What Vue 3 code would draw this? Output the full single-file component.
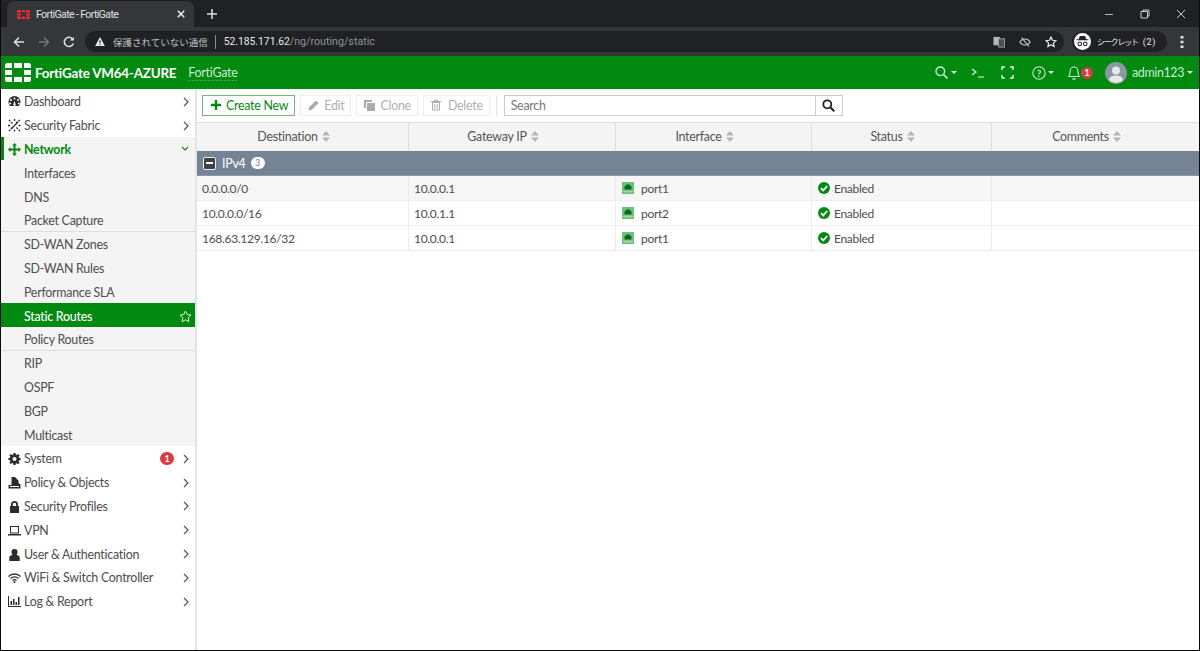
<script setup>
const topItems = [
  { label: 'Dashboard', icon: 'dash' },
  { label: 'Security Fabric', icon: 'fabric' },
]
const netItems = [
  { label: 'Interfaces' }, { label: 'DNS' }, { label: 'Packet Capture', sep: true },
  { label: 'SD-WAN Zones' }, { label: 'SD-WAN Rules' }, { label: 'Performance SLA' },
  { label: 'Static Routes', active: true }, { label: 'Policy Routes', sep: true },
  { label: 'RIP' }, { label: 'OSPF' }, { label: 'BGP' }, { label: 'Multicast' },
]
const bottomItems = [
  { label: 'System', icon: 'gear', badge: 1 },
  { label: 'Policy & Objects', icon: 'policy' },
  { label: 'Security Profiles', icon: 'lock' },
  { label: 'VPN', icon: 'laptop' },
  { label: 'User & Authentication', icon: 'user' },
  { label: 'WiFi & Switch Controller', icon: 'wifi' },
  { label: 'Log & Report', icon: 'chart' },
]
const columns = ['Destination', 'Gateway IP', 'Interface', 'Status', 'Comments']
const rows = [
  { dest: '0.0.0.0/0', gw: '10.0.0.1', port: 'port1', tint: true },
  { dest: '10.0.0.0/16', gw: '10.0.1.1', port: 'port2' },
  { dest: '168.63.129.16/32', gw: '10.0.0.1', port: 'port1' },
]
const iconPaths = {
  dash: 'M6.5 1A6 6 0 0 0 .5 7c0 1.6.6 3 1.6 4h8.8a6 6 0 0 0 1.6-4 6 6 0 0 0-6-6Zm0 1.5a1 1 0 1 1 0 2 1 1 0 0 1 0-2ZM3 4a1 1 0 1 1 0 2 1 1 0 0 1 0-2Zm7 0a1 1 0 1 1 0 2 1 1 0 0 1 0-2ZM2.2 7.5a1 1 0 1 1 0 2 1 1 0 0 1 0-2Zm8.6 0a1 1 0 1 1 0 2 1 1 0 0 1 0-2ZM6.5 6l1 3a1.2 1.2 0 1 1-2 0Z',
  gear: 'M5.5 1h2l.3 1.6 1 .4L10.200 2l1.400 1.400-1 1.400.4 1 1.600.3v2l-1.600.3-.4 1 1 1.400-1.400 1.400-1.400-1-1 .4L7.500 13h-2l-.3-1.600-1-.4-1.400 1-1.400-1.400 1-1.400-.4-1L.4 8V6L2 5.700l.4-1-1-1.400L2.800 2l1.400 1 1-.4ZM6.500 5a2 2 0 1 0 0 4 2 2 0 0 0 0-4Z',
  policy: 'M3.500 1h3.500l3.500 3.500V7l2 1.500V12.500H.5V9h3ZM2 10v1h9v-1Z',
  lock: 'M6.500 1a3.500 3.500 0 0 0-3.500 3.500V6H2v7h9V6h-1V4.500A3.500 3.500 0 0 0 6.500 1Zm0 1.800c1 0 1.700.7 1.700 1.700V6H4.800V4.500c0-1 .7-1.700 1.700-1.700Z',
  laptop: 'M2 2h9v7.500H2Zm1 1v5.500h7V3ZM0 10h13v1.500H0Z',
  user: 'M6.500 1a3 3 0 0 1 3 3.200c0 1-.4 2-1 2.600l2.500 1.200c.5.300.7.700.7 1.200V13H1.300V9.200c0-.5.2-.9.700-1.200l2.500-1.200c-.6-.6-1-1.600-1-2.600a3 3 0 0 1 3-3.200Z',
  chart: 'M0 1h1v10h12v1H0Zm2.500 5h1.500v4H2.500Zm2.500-2h1.500v6H5Zm2.500 3H9v3H7.500Zm2.500-5h1.500v8H10Z',
}
</script>

<template>
  <div class="screen">
    <div class="tabstrip">
      <div class="tab">
        <svg class="favicon" viewBox="0 0 13 9" width="13" height="9">
          <path fill="#ee2b35" d="M1 0h3v2.500H0V1a1 1 0 0 1 1-1ZM5 0h3v2.500H5ZM9 0h3a1 1 0 0 1 1 1v1.500H9ZM0 3.500h4V5.500H0ZM9 3.500h4V5.500H9ZM0 6.500h4V9H1a1 1 0 0 1-1-1ZM5 6.500h3V9H5ZM9 6.500h4V8a1 1 0 0 1-1 1H9Z" />
        </svg>
        <span class="tab-title">FortiGate - FortiGate</span>
        <svg class="tab-x" viewBox="0 0 10 10" width="8" height="8"><path d="M1 1l8 8M9 1l-8 8" stroke="#e8eaed" stroke-width="2" /></svg>
      </div>
      <svg class="newtab" viewBox="0 0 10 10" width="10" height="10"><path d="M5 0v10M0 5h10" stroke="#dfe1e5" stroke-width="1.500" /></svg>
      <div class="winctl">
        <svg viewBox="0 0 10 10" width="10" height="10"><path d="M1 5.500h8" stroke="#bbb" stroke-width="1" /></svg>
        <svg viewBox="0 0 10 10" width="10" height="10"><path d="M1 2.500h6.500V9H1ZM3 2.500V1h6v6H7.500" fill="none" stroke="#ccc" stroke-width="1" /></svg>
        <svg viewBox="0 0 10 10" width="10" height="10"><path d="M1 1l8 8M9 1l-8 8" stroke="#ccc" stroke-width="1" /></svg>
      </div>
    </div>

    <div class="browserbar">
      <svg class="nav" viewBox="0 0 12 12" width="12" height="12"><path d="M11 6H1.500M6 1.500 1.500 6 6 10.500" fill="none" stroke="#dfe1e5" stroke-width="1.500" /></svg>
      <svg class="nav" viewBox="0 0 12 12" width="12" height="12"><path d="M1 6h9.500M6 1.500 10.500 6 6 10.500" fill="none" stroke="#74777b" stroke-width="1.500" /></svg>
      <svg class="nav" viewBox="0 0 12 12" width="12" height="12"><path d="M10.300 7.500A4.600 4.600 0 1 1 9.500 3" fill="none" stroke="#dfe1e5" stroke-width="1.500" /><path d="M10.800.8v3.800H7z" fill="#dfe1e5" /></svg>
      <div class="omnibox">
        <svg viewBox="0 0 12 11" width="10" height="9"><path fill="#e8eaed" d="M6 0l6 11H0Z" /><path stroke="#202124" stroke-width="1.300" d="M6 4v3.500M6 8.500v1.200" /></svg>
        <span class="warn">保護されていない通信</span>
        <span class="pipe"></span>
        <span class="host">52.185.171.62</span><span class="path">/ng/routing/static</span>
        <span class="grow"></span>
        <svg class="omni-ico" viewBox="0 0 13 12" width="12" height="12"><rect x=".5" y=".5" width="7" height="9" fill="#b5b8bb" /><rect x="6" y="2.500" width="6.500" height="9" fill="#4a4d51" stroke="#9aa0a6" /></svg>
        <svg class="omni-ico" viewBox="0 0 14 12" width="12" height="12"><path d="M1 6s2.200-3.500 6-3.500S13 6 13 6s-2.200 3.500-6 3.500S1 6 1 6Z" fill="none" stroke="#c4c7c5" stroke-width="1.300" /><path d="M3 .8 11.500 11" stroke="#c4c7c5" stroke-width="1.300" /></svg>
        <svg class="omni-ico star" viewBox="0 0 12 12" width="12" height="12"><path d="M6 1l1.500 3.300 3.500.4-2.600 2.400.7 3.500L6 8.800l-3.100 1.800.7-3.500L1 4.700l3.500-.4Z" fill="none" stroke="#e8eaed" stroke-width="1.200" /></svg>
      </div>
      <div class="incognito">
        <span class="inc-ico">
          <svg viewBox="0 0 14 12" width="13" height="11"><path fill="#202124" d="M4 0h6l1 3.500h2.500v1H.5v-1H3Z" /><circle cx="4" cy="8.500" r="2" fill="none" stroke="#202124" stroke-width="1.100" /><circle cx="10" cy="8.500" r="2" fill="none" stroke="#202124" stroke-width="1.100" /></svg>
        </span>
        <span class="inc-name">シークレット</span>
        <span class="inc-count">(2)</span>
      </div>
      <svg class="kebab" viewBox="0 0 4 14" width="4" height="14"><path fill="#dfe1e5" d="M.5 1h3v2.500h-3zM.5 5.800h3v2.500h-3zM.5 10.500h3V13h-3z" /></svg>
    </div>

    <header class="appbar">
      <svg class="logo" viewBox="0 0 26 19" width="26" height="19">
        <path fill="#fff" d="M2.500 0H7v5H0V2.500A2.500 2.500 0 0 1 2.500 0ZM9 0h8v5H9ZM19 0h4.500A2.500 2.500 0 0 1 26 2.500V5h-7ZM0 7h7v5H0ZM19 7h7v5h-7ZM0 14h7v5H2.500A2.500 2.500 0 0 1 0 16.500ZM9 14h8v5H9ZM19 14h7v2.500a2.500 2.500 0 0 1-2.500 2.500H19Z" />
      </svg>
      <span class="model">FortiGate VM64-AZURE</span>
      <span class="hostname">FortiGate</span>
      <span class="grow"></span>
      <div class="app-actions">
        <span class="act a-search">
          <svg viewBox="0 0 13 13" width="13" height="13"><circle cx="5.300" cy="5.300" r="4.300" fill="none" stroke="#cdeccf" stroke-width="1.400" /><path d="M8.500 8.500l4 4" stroke="#cdeccf" stroke-width="1.600" /></svg>
          <i class="caret"></i>
        </span>
        <svg class="act a-cli" viewBox="0 0 14 10" width="14" height="10"><path d="M1 1l4 3-4 3M7 9h6" fill="none" stroke="#e3f4e4" stroke-width="1.200" /></svg>
        <svg class="act a-full" viewBox="0 0 13 13" width="13" height="13"><path d="M1 4V1h3M9 1h3v3M12 9v3H9M4 12H1V9" fill="none" stroke="#e3f4e4" stroke-width="1.400" /></svg>
        <span class="act a-help">
          <svg viewBox="0 0 14 14" width="14" height="14"><circle cx="7" cy="7" r="6.200" fill="none" stroke="#cdeccf" stroke-width="1.100" /><text x="7" y="10.500" text-anchor="middle" class="qmark">?</text></svg>
          <i class="caret"></i>
        </span>
        <span class="act a-bell">
          <svg viewBox="0 0 12 14" width="12" height="14"><path d="M6 1a3.800 3.800 0 0 0-3.800 3.800c0 3.700-1.500 5-1.500 5.700h10.600c0-.7-1.500-2-1.500-5.700A3.800 3.800 0 0 0 6 1ZM4.500 12.300a1.600 1.600 0 0 0 3 0" fill="none" stroke="#cdeccf" stroke-width="1.100" /></svg>
          <b class="bell-badge">1</b>
        </span>
        <span class="avatar">
          <svg viewBox="0 0 22 22" width="22" height="22"><circle cx="11" cy="11" r="11" fill="#8d96a5" /><circle cx="11" cy="8.500" r="4" fill="#e8e8e8" /><path d="M3.800 18c1-3.500 3.500-4.500 7.200-4.500s6.200 1 7.200 4.500a10 10 0 0 1-14.400 0Z" fill="#e8e8e8" /></svg>
        </span>
        <span class="username">admin123</span><i class="caret"></i>
      </div>
    </header>

    <div class="main">
      <nav class="sidebar">
        <a v-for="item in topItems" :key="item.label" class="nav-row">
          <svg v-if="item.icon === 'dash'" class="nav-ico" viewBox="0 0 13 13" width="13" height="13"><path fill="#2c2c2c" fill-rule="evenodd" :d="iconPaths.dash" /></svg>
          <svg v-else class="nav-ico" viewBox="0 0 13 13" width="13" height="13"><path d="M1 1l4 4M12 1 8 4M1 12l4-4M12 12 8 8M6.500 0v2.500M6.500 10.500V13M0 6.500h2.500M10.500 6.500H13" stroke="#2c2c2c" stroke-width="1.300" stroke-dasharray="2 1" /><path d="M3 10 10 3" stroke="#2c2c2c" stroke-width="1.200" /></svg>
          <span class="nav-label">{{ item.label }}</span>
          <svg class="chev" viewBox="0 0 6 10" width="6" height="10"><path d="M1 1l4 4-4 4" fill="none" stroke="#555" stroke-width="1.200" /></svg>
        </a>
        <div class="net-group">
          <a class="nav-row net-head">
            <svg class="nav-ico" viewBox="0 0 13 13" width="13" height="13"><path fill="#008a0f" d="M6.500 0 9 2.500H7.500V5.500h3V4L13 6.500 10.500 9V7.500h-3v3H9L6.500 13 4 10.500h1.500v-3h-3V9L0 6.500 2.500 4v1.500h3v-3H4Z" /></svg>
            <span class="nav-label">Network</span>
            <svg class="chev" viewBox="0 0 8 6" width="8" height="6"><path d="M1 1l3 3 3-3" fill="none" stroke="#008a0f" stroke-width="1.100" /></svg>
          </a>
          <a v-for="item in netItems" :key="item.label" class="nav-row sub" :class="{ active: item.active, sep: item.sep }">
            <span class="nav-label">{{ item.label }}</span>
            <svg v-if="item.active" class="star-out" viewBox="0 0 13 13" width="13" height="13"><path d="M6.500 1l1.700 3.600 3.800.5-2.800 2.700.7 3.900-3.400-1.900-3.400 1.900.7-3.900L1 5.100l3.800-.5Z" fill="none" stroke="#e3f4e4" stroke-width="1" /></svg>
          </a>
        </div>
        <a v-for="item in bottomItems" :key="item.label" class="nav-row">
          <svg v-if="item.icon === 'wifi'" class="nav-ico" viewBox="0 0 13 13" width="13" height="13"><path d="M.5 5.500a8.500 8.500 0 0 1 12 0M2.500 7.500a5.700 5.700 0 0 1 8 0M4.500 9.500a2.800 2.800 0 0 1 4 0" fill="none" stroke="#2c2c2c" stroke-width="1.300" /><circle cx="6.500" cy="11" r="1" fill="#2c2c2c" /></svg>
          <svg v-else class="nav-ico" viewBox="0 0 13 13" width="13" height="13"><path fill="#2c2c2c" fill-rule="evenodd" :d="iconPaths[item.icon]" /></svg>
          <span class="nav-label">{{ item.label }}</span>
          <b v-if="item.badge" class="side-badge">{{ item.badge }}</b>
          <svg class="chev" viewBox="0 0 6 10" width="6" height="10"><path d="M1 1l4 4-4 4" fill="none" stroke="#555" stroke-width="1.200" /></svg>
        </a>
      </nav>

      <section class="content">
        <div class="toolbar">
          <button class="btn create">
            <svg viewBox="0 0 10 10" width="10" height="10"><path d="M5 0v10M0 5h10" stroke="#008a0f" stroke-width="2.400" /></svg>
            Create New
          </button>
          <button class="btn off">
            <svg viewBox="0 0 11 11" width="11" height="11"><path fill="#aaa" d="M8 .5 10.500 3 3.500 10 .5 10.500 1 7.500Z" /></svg>
            Edit
          </button>
          <button class="btn off">
            <svg viewBox="0 0 11 11" width="11" height="11"><path fill="#aaa" d="M3 3h8v8H3ZM0 0h8v2H2v6H0Z" /></svg>
            Clone
          </button>
          <button class="btn off del">
            <svg viewBox="0 0 10 12" width="10" height="12"><path d="M1.500 3.500h7V11h-7ZM0 2.500h10M3.500 2.500V1h3v1.500M3.800 5v4.500M6.200 5v4.500" fill="none" stroke="#aaa" stroke-width="1" /></svg>
            Delete
          </button>
          <span class="divider"></span>
          <div class="search">
            <span class="search-input">Search</span>
            <span class="search-btn">
              <svg viewBox="0 0 13 13" width="13" height="13"><circle cx="5.300" cy="5.300" r="4" fill="none" stroke="#222" stroke-width="1.800" /><path d="M8.300 8.300l4 4" stroke="#222" stroke-width="2" /></svg>
            </span>
          </div>
        </div>

        <div class="grid head-row">
          <div v-for="col in columns" :key="col" class="th">
            {{ col }}
            <svg viewBox="0 0 8 11" width="8" height="11"><path fill="#b5b5b5" d="M4 0l4 4.500H0ZM0 6.500h8L4 11Z" /></svg>
          </div>
        </div>
        <div class="group-row">
          <span class="collapse"><i></i></span>
          <span class="group-name">IPv4</span>
          <span class="count">3</span>
        </div>
        <div v-for="(row, i) in rows" :key="i" class="grid data-row" :class="{ tint: row.tint }">
          <div class="td">{{ row.dest }}</div>
          <div class="td">{{ row.gw }}</div>
          <div class="td">
            <svg class="port" viewBox="0 0 12 12" width="12" height="12"><rect width="12" height="12" fill="#6cc07a" /><path fill="#0a6a1c" d="M2.500 4H4V2.500h4V4h1.500V7.500h-7Z" /><path stroke="#e3f4e4" stroke-width="1.500" stroke-dasharray="1 1" d="M1.500 9.500h9" /></svg>
            {{ row.port }}
          </div>
          <div class="td">
            <svg class="ok" viewBox="0 0 12 12" width="12" height="12"><circle cx="6" cy="6" r="6" fill="#008a0f" /><path d="M3 6.200l2.200 2.200L9.200 4" fill="none" stroke="#fff" stroke-width="1.800" /></svg>
            Enabled
          </div>
          <div class="td"></div>
        </div>
      </section>
    </div>
  </div>
</template>

<style>
html, body { margin: 0; background: #000; }
</style>

<style scoped>
.screen {
  width: 1200px;
  height: 651px;
  box-sizing: border-box;
  border: 1px solid #0a0a0a;
  border-top: 0;
  display: flex;
  flex-direction: column;
  overflow: hidden;
  font-family: Lato, "Noto Sans CJK JP", sans-serif;
  font-size: 12.400px;
  letter-spacing: -.25px;
  color: #4d4d4d;
  background: #fff;
}
.grow { flex: 1; }
.tabstrip {
  height: 27px;
  flex: none;
  background: #202124;
  display: flex;
  align-items: flex-end;
  padding-left: 6px;
  position: relative;
}
.tab {
  width: 187px;
  height: 26px;
  box-sizing: border-box;
  background: #35363a;
  border-radius: 7px 7px 0 0;
  display: flex;
  align-items: center;
  padding: 0 9px 0 10px;
  color: #dfe1e5;
  font-size: 10.500px;
  letter-spacing: -.6px;
  font-family: Roboto, sans-serif;
}
.favicon { margin-right: 6px; }
.tab-title { flex: 1; }
.newtab { margin: 0 0 8px 13px; }
.winctl {
  margin-left: auto;
  height: 27px;
  display: flex;
  align-items: center;
  gap: 26px;
  padding-right: 13px;
}
.browserbar {
  height: 29px;
  flex: none;
  background: #35363a;
  display: flex;
  align-items: center;
  padding-left: 12px;
  letter-spacing: 0;
}
.nav { margin-right: 13px; flex: none; }
.omnibox {
  width: 979px;
  margin-left: -3px;
  height: 21px;
  box-sizing: border-box;
  border-radius: 11px;
  background: #202124;
  display: flex;
  align-items: center;
  padding: 0 7px 0 10px;
  font-family: Roboto, "Noto Sans CJK JP", sans-serif;
  font-size: 10.500px;
  color: #e8eaed;
}
.warn { margin-left: 8px; color: #bdc1c6; font-size: 9.500px; }
.pipe { width: 1px; height: 14px; background: #8a8d91; margin: 0 8px 0 7px; }
.host { color: #e8eaed; font-size: 10.300px; }
.path { color: #8e9296; font-size: 10.700px; }
.omni-ico { margin-left: 14px; }
.omni-ico.star { margin-left: 14px; }
.incognito {
  margin-left: 8px;
  width: 95px;
  height: 21px;
  border-radius: 11px;
  background: #202124;
  display: flex;
  align-items: center;
  color: #e8eaed;
  font-size: 8px;
  font-family: "Noto Sans CJK JP", sans-serif;
  white-space: nowrap;
  flex: none;
}
.inc-name { letter-spacing: -1.200px; }
.inc-count { margin-left: 5px; font-size: 9px; font-family: Roboto, sans-serif; letter-spacing: .6px; }
.inc-ico {
  width: 17px;
  height: 17px;
  border-radius: 50%;
  background: #fff;
  display: flex;
  align-items: center;
  justify-content: center;
  margin: 0 6px 0 2px;
  flex: none;
}
.kebab { margin-left: 13px; }
.appbar {
  height: 33px;
  flex: none;
  background: #008a0f;
  display: flex;
  align-items: center;
  padding-left: 4px;
  color: #fff;
  border-bottom: 0;
}
.logo { margin-right: 4px; }
.model { font-size: 13.400px; font-weight: 700; margin-right: 12px; letter-spacing: -.2px; }
.hostname {
  font-size: 12.400px;
  color: #cdeccf;
  line-height: 15px;
  border-bottom: 1px dotted #5bb064;
}
.app-actions { display: flex; align-items: center; padding-right: 6px; color: #cdeccf; }
.act { display: flex; align-items: center; }
.a-search { gap: 3px; margin-right: 14px; }
.a-cli { margin-right: 16px; }
.a-full { margin-right: 18px; }
.a-help { gap: 2px; margin-right: 14px; }
.qmark { font: 700 10px Lato, sans-serif; fill: #cdeccf; }
.a-bell { margin-right: 12px; }
.caret {
  display: inline-block;
  width: 0;
  height: 0;
  border-left: 3px solid transparent;
  border-right: 3px solid transparent;
  border-top: 3px solid #e3f4e4;
}
.bell-badge {
  width: 12px;
  height: 12px;
  border-radius: 50%;
  background: #db3a3f;
  color: #fff;
  font-size: 9px;
  line-height: 12px;
  text-align: center;
  margin-left: 1px;
}
.avatar { display: flex; margin-right: 5px; }
.username { margin-right: 3px; letter-spacing: -.35px; }
.main { flex: 1; display: flex; min-height: 0; }
.sidebar {
  width: 196px;
  flex: none;
  box-sizing: border-box;
  border-right: 2px solid #e4e4e4;
}
.nav-row {
  height: 23.800px;
  box-sizing: border-box;
  display: flex;
  align-items: center;
  padding: 2px 5px 0 7px;
  position: relative;
}
.nav-ico { margin-right: 3px; flex: none; }
.nav-label { flex: 1; white-space: nowrap; }
.chev { flex: none; margin-right: 1px; }
.net-group { background: #f4f4f4; }
.net-head { color: #008a0f; font-weight: 700; }
.net-head::before {
  content: "";
  position: absolute;
  left: 0;
  top: 0;
  bottom: 0;
  width: 3px;
  background: #008a0f;
}
.sub { padding-left: 23px; }
.sub.sep { border-bottom: 1px solid #ddd; }
.sub.active { background: #008a0f; color: #fff; font-weight: 500; padding-right: 3px; }
.star-out { flex: none; }
.side-badge {
  width: 14px;
  height: 13px;
  border-radius: 7px;
  background: #db3a3f;
  color: #fff;
  font-size: 9px;
  line-height: 13px;
  text-align: center;
  margin-right: 9px;
}
.content { flex: 1; min-width: 0; }
.toolbar {
  height: 34px;
  box-sizing: border-box;
  display: flex;
  align-items: center;
  padding: 0 0 1px 5px;
  border-bottom: 1px solid #ddd;
}
.btn {
  height: 21px;
  box-sizing: border-box;
  padding: 0 6px 0 7px;
  display: flex;
  align-items: center;
  gap: 5px;
  background: #fff;
  border: 1px solid #eee;
  font: 12.400px Lato, sans-serif;
  letter-spacing: -.25px;
  color: #b0b0b0;
  margin-right: 5px;
}
.btn.create { border: 1px solid #70b878; color: #008a0f; padding: 0 6px 0 8px; margin-right: 5px; }
.btn.del { gap: 7px; }
.divider { width: 1px; height: 21px; background: #e4e4e4; margin: 0 7px 0 1px; }
.search {
  width: 339px;
  height: 21px;
  box-sizing: border-box;
  border: 1px solid #ccc;
  display: flex;
}
.search-input { flex: 1; padding-left: 6px; line-height: 19px; color: #777; }
.search-btn {
  width: 26px;
  border-left: 1px solid #ccc;
  display: flex;
  align-items: center;
  justify-content: center;
}
.grid { display: grid; grid-template-columns: 212px 207px 196px 180px 1fr; }
.head-row { height: 28px; background: #f4f4f4; }
.th {
  display: flex;
  align-items: center;
  justify-content: center;
  gap: 4px;
  padding: 0 18px 1px 0;
  border-right: 1px solid #ddd;
  color: #555;
}
.th:last-child { border-right: 0; }
.group-row {
  height: 25px;
  box-sizing: border-box;
  background: #748494;
  display: flex;
  align-items: center;
  padding-left: 6px;
  color: #fff;
  border-bottom: 1px solid #8a98a5;
}
.collapse {
  width: 13px;
  height: 13px;
  box-sizing: border-box;
  border: 1px solid #eee;
  border-radius: 2px;
  background: #3a424a;
  display: flex;
  align-items: center;
  justify-content: center;
  margin-right: 6px;
}
.collapse i { width: 7px; height: 2px; background: #fff; }
.group-name { margin-right: 5px; }
.count {
  width: 14px;
  height: 12px;
  border-radius: 6px;
  background: #fff;
  color: #748494;
  font-size: 9px;
  line-height: 12px;
  text-align: center;
}
.data-row { height: 25px; box-sizing: border-box; border-bottom: 1px solid #ececec; }
.data-row.tint { background: #f6f6f6; }
.td {
  display: flex;
  align-items: center;
  padding-left: 5px;
  border-right: 1px solid #ececec;
  font-size: 12px;
  letter-spacing: -.3px;
}
.td:last-child { border-right: 0; }
.port { margin: 0 7px 0 1px; }
.ok { margin: 0 4px 0 1px; }
</style>
